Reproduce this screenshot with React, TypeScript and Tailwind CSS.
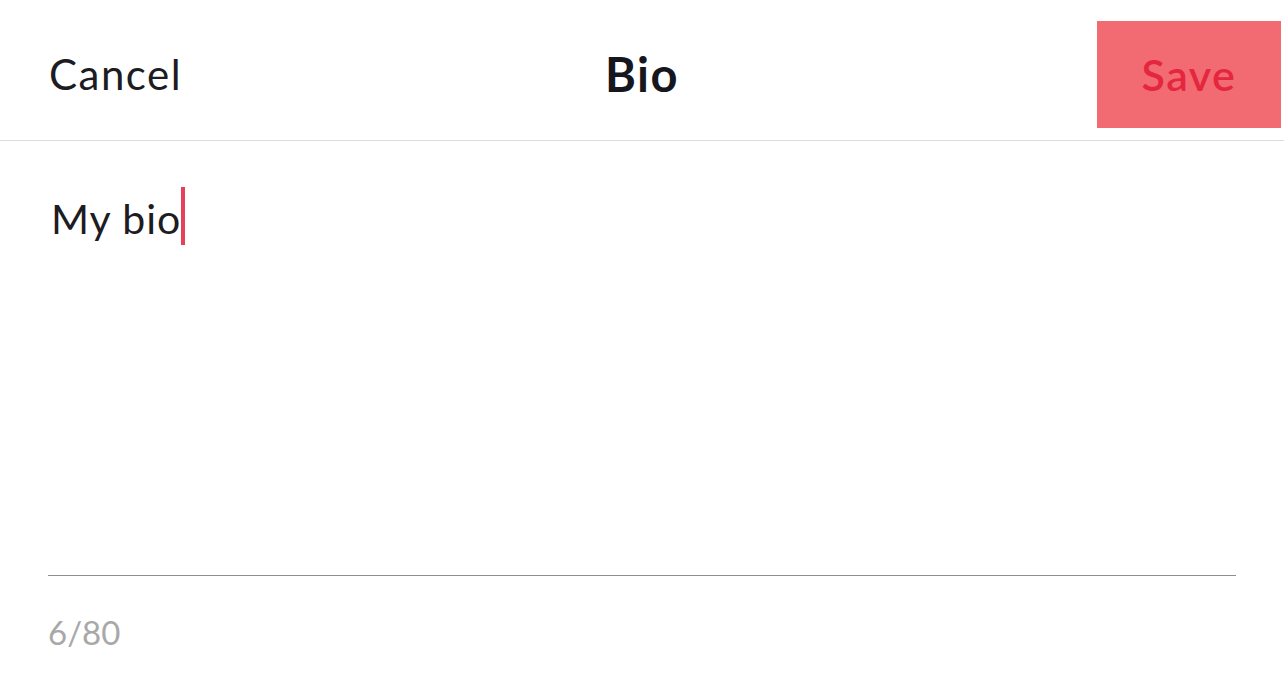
export default function App() {
  return (
    <div className="w-[1284px] h-[678px] bg-white overflow-hidden font-['Lato','Open_Sans',sans-serif]">
      <header className="h-[141px] grid grid-cols-[1fr_auto_1fr] items-center border-b border-[#dcdcdc] pt-[8px]">
        <div className="pl-[49px]">
          <button className="text-[42px] text-[#1c1c22] leading-none tracking-[1.5px]">Cancel</button>
        </div>
        <h1 className="text-[47px] font-bold text-[#16161e] leading-none tracking-[1.5px]">Bio</h1>
        <div className="flex justify-end pr-[3px]">
          <button className="w-[184px] h-[107px] bg-[#f26b72] text-[#e4273f] text-[43px] font-semibold leading-none tracking-[1.5px]">
            Save
          </button>
        </div>
      </header>
      <main className="px-[48px]">
        <div className="h-[434px] pt-[57px]">
          <p className="flex items-start text-[41px] text-[#1c1c22] leading-none tracking-[1px] pl-[3px]">
            My bio
            <span className="inline-block w-[4px] h-[58px] bg-[#e5415a] -mt-[11px]"></span>
          </p>
        </div>
        <div className="border-t border-[#8e8e8e]"></div>
        <p className="mt-[40px] text-[33px] text-[#a8a8a8] leading-none">6/80</p>
      </main>
    </div>
  );
}
